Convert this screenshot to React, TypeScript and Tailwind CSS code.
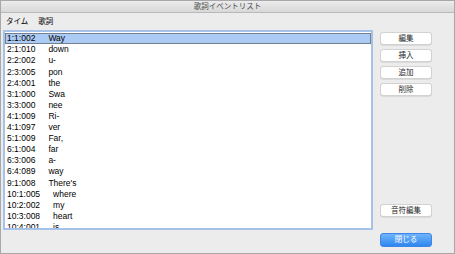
import React from "react";

const rows = [
  ["1:1:002", "Way"],
  ["2:1:010", "down"],
  ["2:2:002", "u-"],
  ["2:3:005", "pon"],
  ["2:4:001", "the"],
  ["3:1:000", "Swa"],
  ["3:3:000", "nee"],
  ["4:1:009", "Ri-"],
  ["4:1:097", "ver"],
  ["5:1:009", "Far,"],
  ["6:1:004", "far"],
  ["6:3:006", "a-"],
  ["6:4:089", "way"],
  ["9:1:008", "There's"],
  ["10:1:005", "where"],
  ["10:2:002", "my"],
  ["10:3:008", "heart"],
  ["10:4:001", "is"],
];

const font = "font-['Liberation_Sans','Noto_Sans_CJK_JP',sans-serif]";

function Btn({ label }: { label: string }) {
  return (
    <button className="flex h-[13px] w-[52px] items-center justify-center rounded-[3px] border border-[#d2d2d2] bg-white text-[7.5px] leading-none text-[#2a2a2a] shadow-[0_0.5px_0.5px_rgba(0,0,0,0.15)]">
      {label}
    </button>
  );
}

export default function App() {
  return (
    <div
      className={`flex h-[254px] w-[455px] flex-col overflow-hidden border border-[#a8a8a8] bg-[#ececec] ${font}`}
    >
      <div className="flex h-[12px] shrink-0 items-center justify-center border-b border-[#b9b9b9] bg-gradient-to-b from-[#ececec] to-[#d8d8d8] text-[7.5px] leading-none text-[#4a4a4a]">
        歌詞イベントリスト
      </div>
      <div className="flex flex-1 pl-[2px]">
        <div className="flex w-[370px] flex-col">
          <div className="flex h-[17px] items-center gap-[10px] pl-[3px] pt-[1px] text-[7.5px] leading-none text-black">
            <span>タイム</span>
            <span>歌詞</span>
          </div>
          <div className="h-[200px] overflow-hidden border-2 border-[#a6c2e8] bg-white pt-[1px]">
            {rows.map(([time, lyric], i) => (
              <div
                key={i}
                className={`flex h-[11.1px] items-center whitespace-nowrap pl-[1px] text-[8.5px] leading-none text-black ${
                  i === 0 ? "border border-[#74808e] bg-[#abcaf4]" : "border border-transparent"
                }`}
              >
                <span>{time}</span>
                <span className="ml-[13px]">{lyric}</span>
              </div>
            ))}
          </div>
        </div>
        <div className="ml-[7px] flex w-[52px] flex-col pt-[19px]">
          <div className="flex flex-col gap-[4px]">
            <Btn label="編集" />
            <Btn label="挿入" />
            <Btn label="追加" />
            <Btn label="削除" />
          </div>
          <div className="mt-[108px]">
            <Btn label="音符編集" />
          </div>
          <button className="mt-[16px] flex h-[14px] w-[52px] items-center justify-center rounded-[3px] border border-[#3d86e6] bg-gradient-to-b from-[#6fb4fb] to-[#2c87ef] text-[7.5px] leading-none text-white">
            閉じる
          </button>
        </div>
      </div>
    </div>
  );
}
